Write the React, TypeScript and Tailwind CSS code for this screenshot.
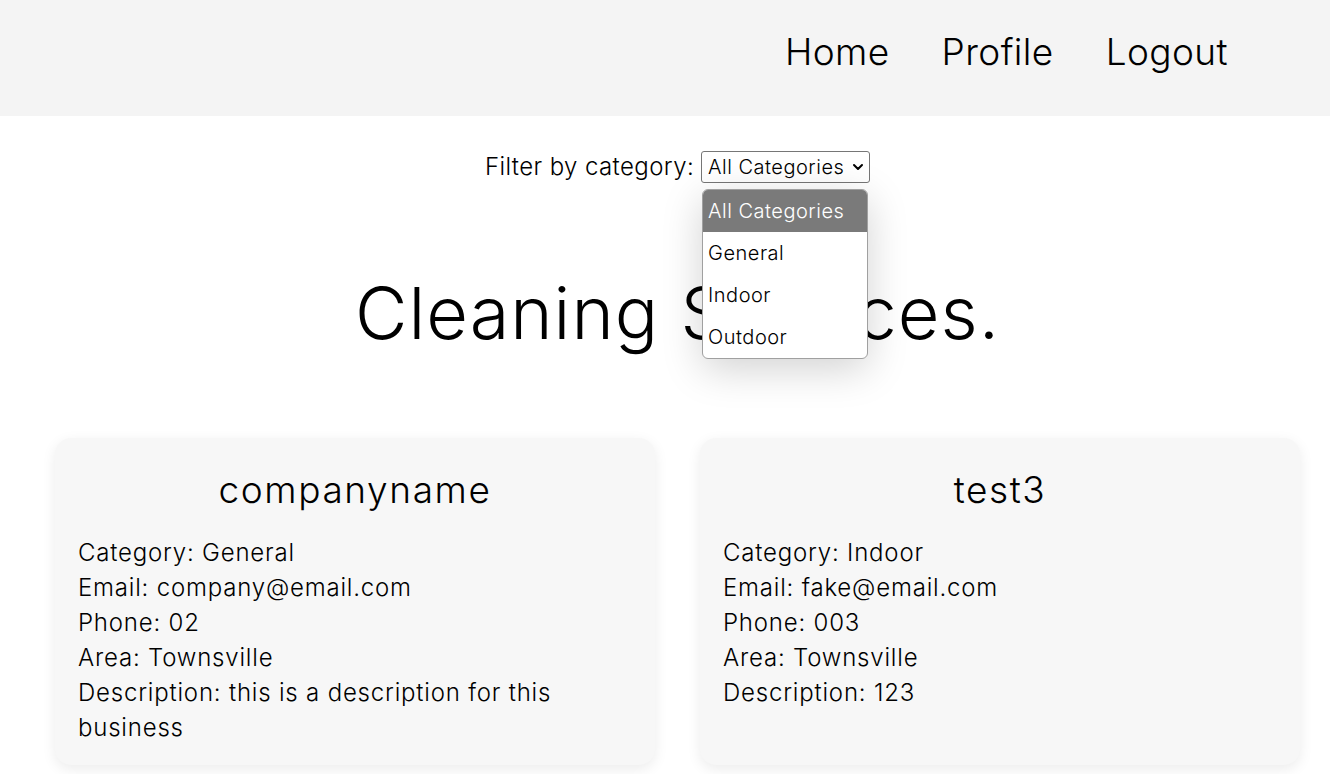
import { ChevronDown } from 'lucide-react';

const companies = [
  {
    name: 'companyname',
    category: 'General',
    email: 'company@email.com',
    phone: '02',
    area: 'Townsville',
    description: 'this is a description for this business',
  },
  {
    name: 'test3',
    category: 'Indoor',
    email: 'fake@email.com',
    phone: '003',
    area: 'Townsville',
    description: '123',
  },
];

const options = ['All Categories', 'General', 'Indoor', 'Outdoor'];

export default function App() {
  return (
    <div className="min-h-screen w-full overflow-hidden bg-white text-black font-light font-['Inter','Noto_Sans',sans-serif]">
      <div className="w-[1355px]">
        {/* Navbar */}
        <nav className="h-[116px] bg-[#f4f4f4] flex items-center justify-end pr-[127px] pb-[12px]">
          <ul className="flex gap-[52px] text-[37px] tracking-[0.4px]">
            <li>Home</li>
            <li>Profile</li>
            <li>Logout</li>
          </ul>
        </nav>

        {/* Filter */}
        <div className="flex justify-center items-center gap-[7px] pt-[33px]">
          <span className="text-[24px] tracking-[0.4px]">Filter by category:</span>
          <div className="relative">
            <div className="h-[32px] w-[169px] border border-[#767676] rounded-[3px] flex items-center pl-[6px] pr-[3px] text-[20px] tracking-[0.5px] justify-between bg-white">
              <span>All Categories</span>
              <ChevronDown className="w-4 h-4" strokeWidth={3} />
            </div>
            {/* open dropdown */}
            <ul className="absolute left-[1px] top-[38px] w-[166px] bg-white border border-[#a0a0a0] rounded-[6px] overflow-hidden shadow-[0_10px_40px_rgba(0,0,0,0.18)] text-[20px] tracking-[0.5px] z-10">
              {options.map((o, i) => (
                <li
                  key={o}
                  className={`h-[42px] flex items-center pl-[5px] ${i === 0 ? 'bg-[#7a7a7a] text-white' : ''}`}
                >
                  {o}
                </li>
              ))}
            </ul>
          </div>
        </div>

        {/* Heading */}
        <h1 className="text-center text-[72px] leading-none mt-[92px] tracking-[1px]">Cleaning Services.</h1>

        {/* Cards */}
        <div className="grid grid-cols-2 gap-[45px] px-[55px] pt-[89px] pb-[10px] items-start">
          {companies.map((c) => (
            <div
              key={c.name}
              className="bg-[#f7f7f7] rounded-[16px] shadow-[0_4px_14px_rgba(0,0,0,0.08)] px-[23px] pt-[28px] pb-[18px] min-h-[327px]"
            >
              <h2 className="text-center text-[37px] leading-[48px] mb-[21px] tracking-[1.6px]">{c.name}</h2>
              <div className="text-[24px] leading-[35px] tracking-[0.8px] pr-[50px]">
                <p>Category: {c.category}</p>
                <p>Email: {c.email}</p>
                <p>Phone: {c.phone}</p>
                <p>Area: {c.area}</p>
                <p>Description: {c.description}</p>
              </div>
            </div>
          ))}
        </div>
      </div>
    </div>
  );
}
